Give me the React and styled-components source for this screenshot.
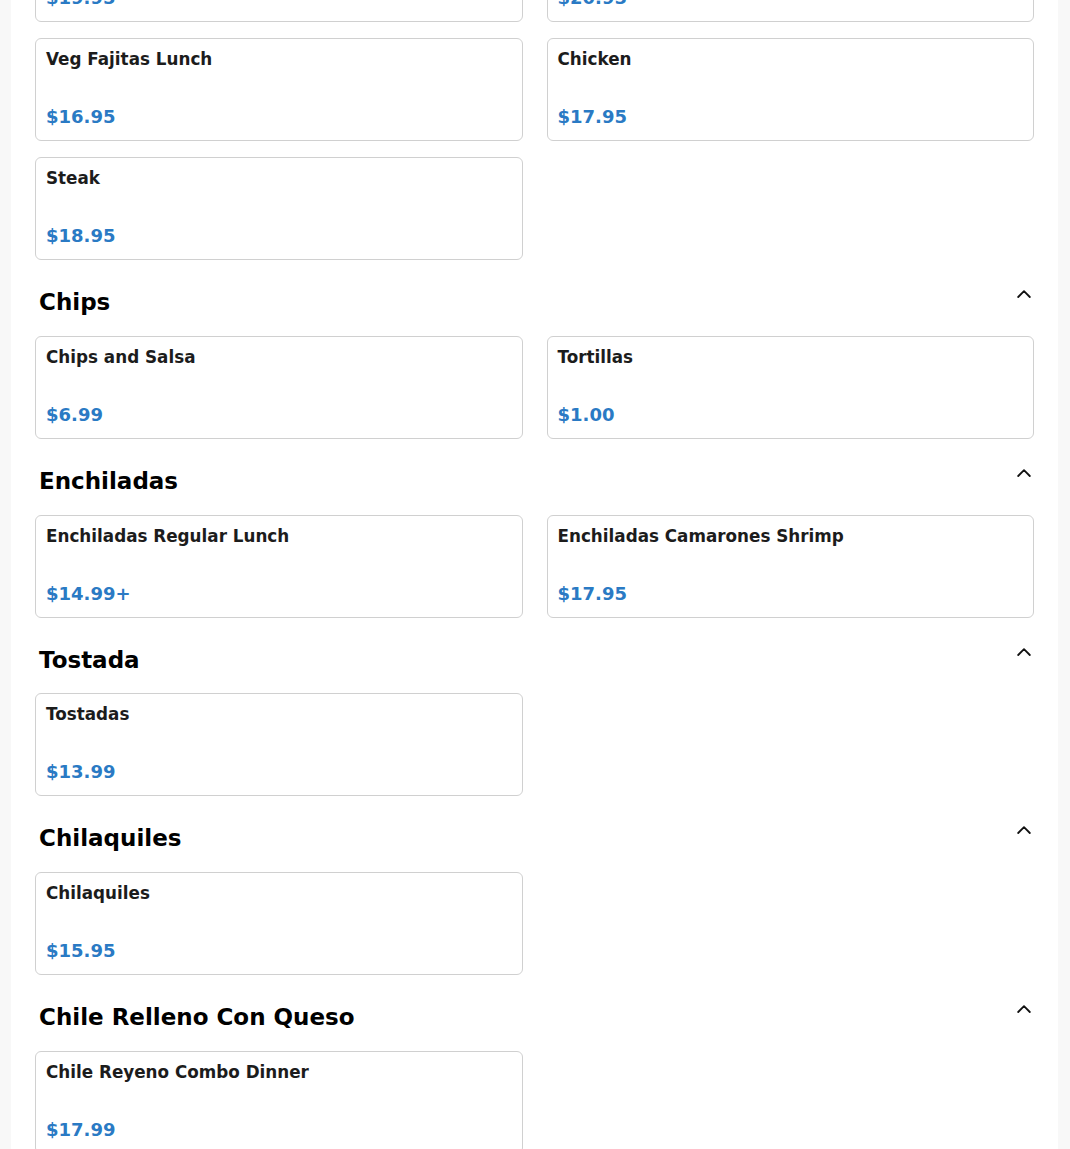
import React from 'react'
import styled, { createGlobalStyle } from 'styled-components'

const GlobalStyle = createGlobalStyle`
  html, body {
    margin: 0;
    padding: 0;
    background: #f8f8f8;
    font-family: "DejaVu Sans", "Noto Sans", sans-serif;
  }
`

const Page = styled.main`
  margin: -81px 12px 0 11px;
  background: #ffffff;
  padding: 0 24px 40px;
  box-sizing: border-box;
`

const Section = styled.section`
  margin-bottom: 27px;
`

const SectionHead = styled.div`
  display: flex;
  justify-content: space-between;
  align-items: flex-start;
  padding: 0 3px 0 4px;
  margin-bottom: 20px;
  cursor: pointer;
`

const SectionTitle = styled.h2`
  margin: 0;
  padding-top: 2px;
  font-size: 23px;
  font-weight: 700;
  line-height: 26.75px;
  color: #000;
`

const Chevron = styled.svg`
  margin-top: 3px;
  flex: none;
`

const Grid = styled.div`
  display: grid;
  grid-template-columns: 1fr 1fr;
  column-gap: 24px;
  row-gap: 16px;
`

const Card = styled.div`
  display: flex;
  flex-direction: column;
  justify-content: space-between;
  min-height: 103px;
  box-sizing: border-box;
  padding: 10px 10px 13px;
  border: 1px solid #d0d0d0;
  border-radius: 6px;
  background: #fff;
`

const ItemName = styled.div`
  font-size: 16.8px;
  font-weight: 700;
  color: #1c1c1c;
`

const Price = styled.div`
  font-size: 18px;
  font-weight: 700;
  color: #2a7ac4;
`

const menu = [
  {
    title: null,
    items: [
      { name: 'Shrimp Fajitas Lunch', price: '$19.95' },
      { name: 'Fajitas Texanas', price: '$20.95' },
      { name: 'Veg Fajitas Lunch', price: '$16.95' },
      { name: 'Chicken', price: '$17.95' },
      { name: 'Steak', price: '$18.95' },
    ],
  },
  {
    title: 'Chips',
    items: [
      { name: 'Chips and Salsa', price: '$6.99' },
      { name: 'Tortillas', price: '$1.00' },
    ],
  },
  {
    title: 'Enchiladas',
    items: [
      { name: 'Enchiladas Regular Lunch', price: '$14.99+' },
      { name: 'Enchiladas Camarones Shrimp', price: '$17.95' },
    ],
  },
  {
    title: 'Tostada',
    items: [{ name: 'Tostadas', price: '$13.99' }],
  },
  {
    title: 'Chilaquiles',
    items: [{ name: 'Chilaquiles', price: '$15.95' }],
  },
  {
    title: 'Chile Relleno Con Queso',
    items: [{ name: 'Chile Reyeno Combo Dinner', price: '$17.99' }],
  },
]

const ChevronUp = () => (
  <Chevron width="14" height="8" viewBox="0 0 14 8" fill="none">
    <polyline points="1.2,7 7,1.2 12.8,7" stroke="#111" strokeWidth="1.8" strokeLinecap="round" strokeLinejoin="round" />
  </Chevron>
)

const App = () => {
  return (
    <>
      <GlobalStyle />
      <Page>
        {menu.map((section, i) => (
          <Section key={i}>
            {section.title && (
              <SectionHead>
                <SectionTitle>{section.title}</SectionTitle>
                <ChevronUp />
              </SectionHead>
            )}
            <Grid>
              {section.items.map((item) => (
                <Card key={item.name}>
                  <ItemName>{item.name}</ItemName>
                  <Price>{item.price}</Price>
                </Card>
              ))}
            </Grid>
          </Section>
        ))}
      </Page>
    </>
  )
}

export default App
